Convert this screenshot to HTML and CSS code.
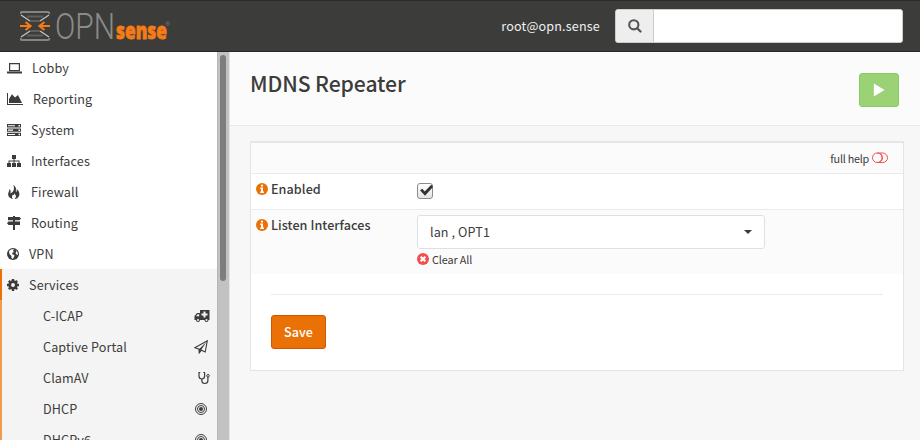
FILE: index.html
```
<!DOCTYPE html>
<html lang="en">
<head>
<meta charset="utf-8">
<title>MDNS Repeater</title>
<link rel="stylesheet" href="styles.css">
</head>
<body>
<header class="topbar">
  <svg class="logo" width="170" height="50" viewBox="0 -7 170 50">
    <g fill="none" stroke="#92928f" stroke-width="1.8">
      <path d="M.5 8V5Q.5 3.9 2 3.9H28Q29.500 3.900 29.500 5V8L21 13V22L29.500 28V31Q29.500 32 28 32H2Q.5 32 .5 31V28L9 22V13Z" stroke="#3c3c3b"/>
      <path d="M.8 6V5Q.8 4 2 4H28Q29.200 4 29.200 5V6M.8 30V31Q.8 32 2 32H28Q29.200 32 29.200 31V30" stroke="#858583" stroke-width="2"/>
      <path d="M1 7L10 13M29 7L20 13M1 29L10 23M29 29L20 23" stroke="#c0c0bd" stroke-width="1.500"/>
      <path d="M7 8.500H23M10 13H20M10 23H20M7 27.500H23" stroke="#5f5f5d"/>
    </g>
    <path d="M0 18H10M5.500 14L10.500 18L5.500 22M30 18H20M24.500 14L19.500 18L24.500 22" fill="none" stroke="#f47b16" stroke-width="2.200"/>
    <text class="logo-opn" x="35" y="31" textLength="60" lengthAdjust="spacingAndGlyphs">OPN</text>
    <text class="logo-sense" x="96" y="31" textLength="51" lengthAdjust="spacingAndGlyphs">sense</text>
    <text class="logo-reg" x="145.500" y="17.500">®</text>
  </svg>
  <span class="user">root@opn.sense</span>
  <div class="search">
    <span class="search-icon"><svg width="14" height="14" viewBox="0 0 14 14"><circle cx="5.800" cy="5.800" r="4.600" fill="none" stroke="#555" stroke-width="2.100"/><path d="M9.200 9.200L12.500 12.500" stroke="#555" stroke-width="2.300" stroke-linecap="round"/></svg></span>
    <input class="search-input" type="text" aria-label="Search">
  </div>
</header>
<div class="page">
  <nav class="sidebar">
    <div class="menu">
      <a class="item"><svg width="15" height="14" viewBox="0 0 15 14"><path d="M2.600 2.600H12.400V9.600H2.600Z" fill="none" stroke="#3c3c3b" stroke-width="1.200"/><path d="M0 10.600H15V12Q15 12.500 14 12.500H1Q0 12.500 0 12Z"/></svg><span class="g10">Lobby</span></a>
      <a class="item"><svg width="16" height="14" viewBox="0 0 16 14"><path d="M0 1H1V12H16V13H0ZM2 11V7L5 2.200L8 5.500L11 3L15 11Z"/></svg><span class="g10">Reporting</span></a>
      <a class="item"><svg width="14" height="14" viewBox="0 0 14 14"><path fill-rule="evenodd" d="M0 1H14V4.500H0ZM1 2.200V3.300H8V2.200ZM11.500 2V3.500H13V2ZM0 5.500H14V8.800H0ZM1 6.600V7.700H6V6.600ZM11.500 6.400V7.900H13V6.400ZM0 9.800H14V13H0ZM1 10.900V12H8V10.900ZM11.500 10.700V12.200H13V10.700Z"/></svg><span class="g10">System</span></a>
      <a class="item"><svg width="14" height="14" viewBox="0 0 14 14"><path d="M5 1H9V5H7.500V6.500H12.500V9H14V13H10V9H11.500V7.500H7.500V9H9V13H5V9H6.500V7.500H2.500V9H4V13H0V9H1.500V6.500H6.500V5H5Z"/></svg><span class="g10">Interfaces</span></a>
      <a class="item"><svg width="14" height="14" viewBox="0 0 14 14"><path d="M6.200 0C11 3 8 5.500 9.200 7C10.200 6.200 9.800 5 9.500 4C12.500 6 13.500 10 11 12.500C9.800 13.700 8.500 14 7.500 14C9.800 12 9 10 7.200 8.200C7.600 10 6.400 10.500 6 9.500C4.500 11 4.800 12.800 5.800 14C3 13.500.8 11.500 1.200 8.500C1.500 7 2.300 6 2.600 4C4 5.500 3.800 7 3.300 8.400C7 7 7.800 3.500 6.200 0Z"/></svg><span class="g10">Firewall</span></a>
      <a class="item"><svg width="14" height="14" viewBox="0 0 14 14"><path d="M6 0H8V1H12.500L14 2.500L12.500 4.300H8V5.500H13V9H8V14H6V9H1.500L0 7.300L1.500 5.500H6V4.300H1V1H6Z"/></svg><span class="g10">Routing</span></a>
      <a class="item"><svg width="12" height="14" viewBox="0 0 12 14"><circle cx="6" cy="7" r="6"/><path d="M2 4L4 2.500L7 2L6 4L7 5L5 6L5.500 7.500L7.500 8L7 10L5.500 12L4.500 11V9L2.500 7ZM8.500 2.500L10.500 5L11 8L9.500 7.500L8.500 6L9.500 4.500Z" fill="#fff"/></svg><span class="g10">VPN</span></a>
      <a class="item open"><svg width="12" height="14" viewBox="0 0 12 14"><circle cx="6" cy="7" r="3.300" fill="none" stroke="#3c3c3b" stroke-width="2.700"/><path d="M6 1V4M6 10V13M0 7H3M9 7H12M1.800 2.800L3.900 4.900M8.100 9.100L10.200 11.200M10.200 2.800L8.100 4.900M3.900 9.100L1.800 11.200" stroke="#3c3c3b" stroke-width="2.400"/></svg><span class="g10">Services</span></a>
      <div class="submenu">
        <a class="sub"><span>C-ICAP</span><svg width="16" height="14" viewBox="0 0 16 14"><path d="M6 1H15.500V11H14.500A2 2 0 0 1 10.500 11H6A2 2 0 0 1 2 11H.5V7L3 4H6Z"/><path d="M2 7.200L3.500 5.200H5.200V7.200Z" fill="#f4f4f4"/><path d="M10.500 2.500V8.500M7.500 5.500H13.500" stroke="#f4f4f4" stroke-width="2"/><circle cx="4" cy="11" r="1" fill="#f4f4f4"/><circle cx="12.500" cy="11" r="1" fill="#f4f4f4"/></svg></a>
        <a class="sub"><span>Captive Portal</span><svg class="m2" width="14" height="14" viewBox="0 0 14 14"><path d="M13.300.8L11.200 12L7.500 10.200L5.300 12.800V9.200L.8 7.700Z" fill="none" stroke="#3c3c3b" stroke-width="1.100"/><path d="M5.300 9L12.500 1.800L7 10.200L5 13.500L4.500 9.200Z"/></svg></a>
        <a class="sub"><span>ClamAV</span><svg width="12" height="14" viewBox="0 0 12 14"><path d="M2.300 1.500H1V5Q1 8 3.800 8Q6.600 8 6.600 5V1.500H5.300M3.800 8V9.500Q3.800 12.500 6.800 12.500Q9.900 12.500 9.900 9.500V6" fill="none" stroke="#3c3c3b" stroke-width="1.200"/><circle cx="10" cy="4.800" r="1.300" fill="none" stroke="#3c3c3b"/></svg></a>
        <a class="sub"><span>DHCP</span><svg class="m3" width="12" height="14" viewBox="0 0 12 14"><g fill="none" stroke="#3c3c3b"><circle cx="6" cy="7" r="5.500"/><circle cx="6" cy="7" r="3.500"/></g><circle cx="6" cy="7" r="2"/></svg></a>
        <a class="sub"><span>DHCPv6</span><svg class="m3" width="12" height="14" viewBox="0 0 12 14"><g fill="none" stroke="#3c3c3b"><circle cx="6" cy="7" r="5.500"/><circle cx="6" cy="7" r="3.500"/></g><circle cx="6" cy="7" r="2"/></svg></a>
      </div>
    </div>
    <div class="track"><div class="thumb"></div></div>
  </nav>
  <main class="main">
    <div class="head">
      <h1>MDNS Repeater</h1>
      <button class="play" aria-label="Start"><svg width="12" height="14" viewBox="0 0 12 14"><path d="M.8.5L11.500 7L.8 13.500Z" fill="#fff"/></svg></button>
    </div>
    <section class="panel">
      <div class="row help"><span>full help</span><svg width="16" height="12" viewBox="0 0 16 12"><g fill="none" stroke="#f05050"><rect x=".5" y="1" width="15" height="9.500" rx="4.750"/><path d="M5.250 1A4.750 4.750 0 0 1 5.250 10.500M8 1.200Q10.500 3 10.500 5.750T8 10.300"/></g></svg></div>
      <div class="row enabled">
        <div class="label"><svg width="12" height="12" viewBox="0 0 12 12"><circle cx="6" cy="6" r="6" fill="#ea7105"/><path d="M5 1.800H7V3.500H5ZM4.200 4.600H7V8.500H8V10H4.200V8.500H5V6H4.200Z" fill="#fff"/></svg><b>Enabled</b></div>
        <span class="check"><svg width="16" height="16" viewBox="0 0 16 16"><path d="M3 7.200L5.300 5.700L7.700 8.500L14 2L15.500 2.500V4.500L8 12.800Z" fill="#2e3436"/></svg></span>
      </div>
      <div class="row listen">
        <div class="label"><svg width="12" height="12" viewBox="0 0 12 12"><circle cx="6" cy="6" r="6" fill="#ea7105"/><path d="M5 1.800H7V3.500H5ZM4.200 4.600H7V8.500H8V10H4.200V8.500H5V6H4.200Z" fill="#fff"/></svg><b>Listen Interfaces</b></div>
        <div class="field">
          <div class="select"><span>lan , OPT1</span><i class="caret"></i></div>
          <div class="clear"><svg width="12" height="12" viewBox="0 0 12 12"><circle cx="6" cy="6" r="6" fill="#f05050"/><path d="M3.700 3.700L8.300 8.300M8.300 3.700L3.700 8.300" stroke="#fff" stroke-width="2.200"/></svg><span>Clear All</span></div>
        </div>
      </div>
      <div class="actions"><hr><button class="save">Save</button></div>
    </section>
  </main>
</div>
</body>
</html>
```
FILE: styles.css
```
* { box-sizing: border-box; }
body {
  margin: 0;
  height: 440px;
  overflow: hidden;
  background: #f7f7f7;
  color: #3c3c3b;
  font: 12.6px/20px "Noto Sans CJK JP", "Noto Sans", sans-serif;
}
svg { flex: none; fill: #3c3c3b; }
.topbar {
  height: 52px;
  display: flex;
  align-items: center;
  padding: 0 17px 0 20px;
  background: #3c3c3b;
  border-top: 1px solid #2b2b2a;
  border-bottom: 1px solid #262626;
}
.logo-opn { font: 300 36px Roboto, sans-serif; fill: #8b8b89; }
.logo-sense { font: 800 22px "Open Sans", sans-serif; fill: #f47b16; stroke: #f47b16; stroke-width: .8px; }
.logo-reg { font: 6px "Liberation Sans", sans-serif; fill: #858583; }
.user { margin-left: auto; margin-right: 15px; color: #f0f0f0; letter-spacing: .16px; }
.search { display: flex; width: 288px; height: 34px; border: 1px solid #ccc; border-radius: 3px; background: #fff; overflow: hidden; }
.search-icon { width: 38px; display: flex; align-items: center; justify-content: center; background: #eee; border-right: 1px solid #ccc; }
.search-input { flex: 1; min-width: 0; border: 0; padding: 0 12px; background: #fff; }
.page { display: flex; height: 388px; }
.sidebar { width: 230px; flex: none; display: flex; background: #fff; }
.menu { width: 217px; height: 388px; overflow: hidden; }
.item { display: flex; align-items: center; height: 31px; padding-left: 7px; letter-spacing: .12px; }
.item:first-child { padding-top: 1px; }
.item { padding-top: 1px; }
.g10 { margin-left: 10px; }
.open { background: #f4f4f4; border-left: 2px solid #ea7105; padding-left: 5px; }
.submenu { background: #f4f4f4; border-left: 2px solid #f19b50; }
.sub { display: flex; align-items: center; justify-content: space-between; height: 31px; padding: 1px 7px 0 41px; letter-spacing: .1px; }
.m2 { margin-right: 2px; }
.m3 { margin-right: 3px; }
.track { width: 13px; padding: 3px 3px 0 2px; background: #c1c3c2; border-left: 1px solid #b4b5b4; border-right: 1px solid #e5e5e5; }
.thumb { width: 6px; height: 226px; border-radius: 3px; background: #7c7e7d; }
.main { flex: 1; }
.head { height: 74px; display: flex; justify-content: space-between; align-items: flex-start; padding: 20px 21px 0 20px; background: #fbfbfb; border-bottom: 1px solid #e7e7e7; }
h1 { margin: -2px 0 0; font-size: 21.2px; line-height: 26px; font-weight: 500; letter-spacing: -.1px; }
.play { width: 40px; height: 34px; margin-top: 1px; display: flex; align-items: center; justify-content: center; padding: 0; border: 1px solid #8bcd62; border-radius: 3px; background: #9bd275; }
.panel { width: 654px; height: 230px; margin: 15px 0 0 20px; background: #fff; border: 1px solid #e5e5e5; border-top-width: 2px; }
.row { display: flex; }
.help { height: 30px; background: #fbfbfb; justify-content: flex-end; align-items: center; gap: 3px; padding-right: 15px; font-size: 10.8px; letter-spacing: -.25px; }
.enabled { height: 36px; border-top: 1px solid #ebebeb; padding: 5px 5px 0; }
.listen { height: 65px; border-top: 1px solid #ebebeb; padding: 5px; background: #fbfbfb; }
.label { width: 161px; height: 20px; display: flex; align-items: center; gap: 3px; }
.label b { font-weight: 500; letter-spacing: .06px; }
.check { width: 16px; height: 16px; margin-top: 4px; border: 1px solid #8b8b88; border-radius: 3px; background: linear-gradient(#fff, #e4e4e4); display: flex; align-items: center; justify-content: center; }
.select { width: 348px; height: 34px; padding: 0 12px; display: flex; align-items: center; justify-content: space-between; background: #fff; border: 1px solid #e0e0e0; border-radius: 3px; letter-spacing: .1px; }
.caret { border: 4px solid transparent; border-top-color: #3c3c3b; border-bottom: 0; }
.clear { display: flex; align-items: center; gap: 3px; height: 20px; font-size: 10.8px; letter-spacing: -.1px; }
.actions { padding: 20px 20px 0; }
hr { border: 0; border-top: 1px solid #ebebeb; margin: 0 0 20px; }
.save { display: block; width: 55px; height: 34px; padding: 0; border: 1px solid #d45500; border-radius: 3px; background: #ea7105; color: #fff; font: 500 12.6px/20px "Noto Sans CJK JP", sans-serif; }
```
